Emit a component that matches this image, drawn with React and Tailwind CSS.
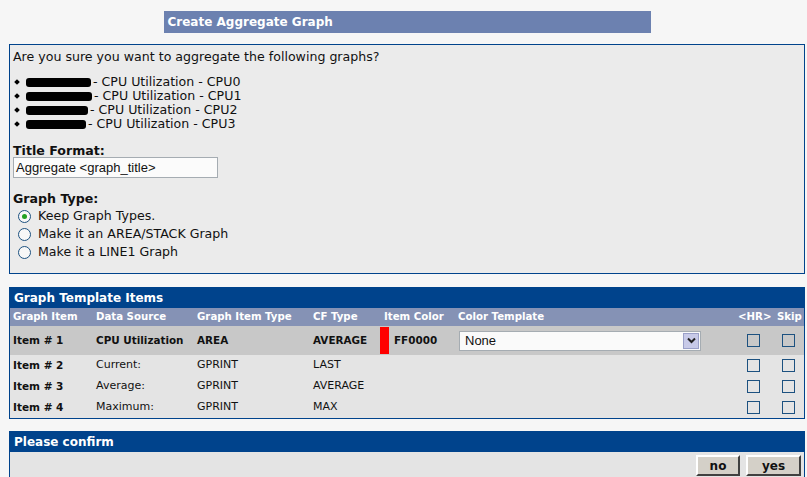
const items = [
  { id: "Item # 1", source: "CPU Utilization", type: "AREA", cf: "AVERAGE", color: "FF0000", main: true },
  { id: "Item # 2", source: "Current:", type: "GPRINT", cf: "LAST" },
  { id: "Item # 3", source: "Average:", type: "GPRINT", cf: "AVERAGE" },
  { id: "Item # 4", source: "Maximum:", type: "GPRINT", cf: "MAX" },
];

const graphs = [
  { blot: "w-[65px]", tail: "CPU0" },
  { blot: "w-[66px]", tail: "CPU1" },
  { blot: "w-[62px]", tail: "CPU2" },
  { blot: "w-[60px] ml-[3px]", tail: "CPU3" },
];

const cols = "grid grid-cols-[83px_101px_116px_70px_75px_280px_37px_1fr]";

const Radio = ({ checked, label }) => (
  <label className="flex items-center h-[18px] pl-[5px]">
    <span className="w-[13px] h-[13px] rounded-full border border-[#1c5180] bg-[#f7f7f7] flex items-center justify-center">
      {checked && <span className="w-[5px] h-[5px] rounded-full bg-[#21a121]" />}
    </span>
    <span className="ml-[7px]">{label}</span>
  </label>
);

const Box = () => <span className="block w-[13px] h-[13px] border border-[#1c5180]" />;

const App = () => {
  return (
    <div className="w-[807px] h-[477px] overflow-hidden bg-[#f6f6f6] font-['DejaVu_Sans',Verdana,sans-serif] text-[#111]">
      <div className="pl-[9px] pr-[2px] pt-[11px]">
        <div className="mx-auto w-[487px] h-[22px] bg-[#6c81b0] text-white font-bold text-[12px] flex items-center pl-[4px]">
          Create Aggregate Graph
        </div>

        {/* confirm text */}
        <div className="mt-[11px] h-[230px] border border-[#00438c] bg-[#ebebeb] px-[3px] pt-[5px] text-[12.6px]">
          <p className="leading-[14px]">Are you sure you want to aggregate the following graphs?</p>
          <ul className="mt-[11px]">
            {graphs.map((g) => (
              <li key={g.tail} className="flex items-center h-[14px] leading-[14px]">
                <span className="ml-[2px] w-[4px] h-[4px] rotate-45 bg-black" />
                <span className={`ml-[7px] h-[9px] rounded-[3px] bg-black ${g.blot}`} />
                <span className="ml-[2px]">- CPU Utilization - {g.tail}</span>
              </li>
            ))}
          </ul>
          <div className="mt-[14px] font-bold leading-[12px]">Title Format:</div>
          <div className="w-[205px] h-[21px] border border-[#a5acb2] bg-[#fbfbfb] flex items-center px-[2px] font-['Liberation_Sans',Arial,sans-serif] text-[13px]">
            Aggregate &lt;graph_title&gt;
          </div>
          <div className="mt-[15px] font-bold leading-[12px]">Graph Type:</div>
          <div className="mt-[2px]">
            <Radio checked label="Keep Graph Types." />
            <Radio label="Make it an AREA/STACK Graph" />
            <Radio label="Make it a LINE1 Graph" />
          </div>
        </div>

        {/* template items */}
        <div className="mt-[13px] border border-[#00438c] bg-[#e4e4e4] text-[11px]">
          <div className="h-[20px] bg-[#00438c] text-white font-bold text-[12px] flex items-center pl-[4px]">
            Graph Template Items
          </div>
          <div className={`${cols} h-[18px] items-center bg-[#8592b5] text-white font-bold text-[10.2px]`}>
            <span className="pl-[3px]">Graph Item</span>
            <span className="pl-[3px]">Data Source</span>
            <span className="pl-[3px]">Graph Item Type</span>
            <span className="pl-[3px]">CF Type</span>
            <span className="pl-[4px]">Item Color</span>
            <span className="pl-[3px]">Color Template</span>
            <span className="pl-[3px]">&lt;HR&gt;</span>
            <span className="pl-[5px]">Skip</span>
          </div>
          {items.map((it) => (
            <div
              key={it.id}
              className={`${cols} items-center ${it.main ? "h-[29px] bg-[#c8c8c8] font-bold text-[10.4px]" : "h-[21px]"}`}
            >
              <span className="pl-[3px] font-bold text-[10.5px]">{it.id}</span>
              <span className="pl-[3px]">{it.source}</span>
              <span className="pl-[3px]">{it.type}</span>
              <span className="pl-[3px]">{it.cf}</span>
              {it.main ? (
                <span className="flex items-center h-full">
                  <span className="w-[9px] h-[27px] bg-[#ff0000]" />
                  <span className="ml-[5px]">{it.color}</span>
                </span>
              ) : (
                <span />
              )}
              {it.main ? (
                <span className="pl-[4px]">
                  <span className="w-[242px] h-[20px] border border-[#a5acb2] bg-[#fafafa] flex items-center justify-between pl-[5px] pr-[1px] font-['Liberation_Sans',Arial,sans-serif] font-normal text-[13px]">
                    None
                    <span className="w-[16px] h-[16px] bg-[#c8cae8] border border-[#9aa0c8] flex items-center justify-center">
                      <svg width="9" height="7" viewBox="0 0 9 7">
                        <path d="M1 1.5 L4.5 5 L8 1.5" stroke="#222" strokeWidth="2" fill="none" />
                      </svg>
                    </span>
                  </span>
                </span>
              ) : (
                <span />
              )}
              <span className="pl-[12px]">
                <Box />
              </span>
              <span className="pl-[10px]">
                <Box />
              </span>
            </div>
          ))}
        </div>

        {/* confirm */}
        <div className="mt-[12px] h-[60px] border border-[#00438c] bg-[#e4e4e4]">
          <div className="h-[20px] bg-[#00438c] text-white font-bold text-[12px] flex items-center pl-[4px]">
            Please confirm
          </div>
          <div className="flex justify-end gap-[6px] pt-[3px] pr-[3px]">
            <button className="w-[44px] h-[21px] bg-[#d4d0c8] border-2 border-t-white border-l-white border-r-[#404040] border-b-[#404040] font-bold text-[12px]">
              no
            </button>
            <button className="w-[55px] h-[21px] bg-[#d4d0c8] border-2 border-t-white border-l-white border-r-[#404040] border-b-[#404040] font-bold text-[12px]">
              yes
            </button>
          </div>
        </div>
      </div>
    </div>
  );
};

export default App;
